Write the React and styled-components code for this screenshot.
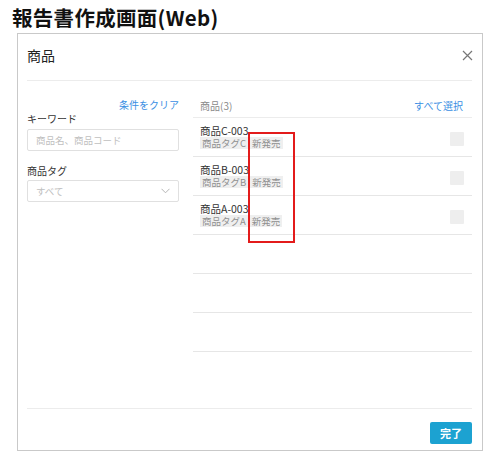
import React from 'react';
import styled, { createGlobalStyle } from 'styled-components';

const GlobalStyle = createGlobalStyle`
  html, body {
    margin: 0;
    padding: 0;
    background: #fff;
  }
  body {
    font-family: "Noto Sans CJK JP", "Liberation Sans", sans-serif;
    color: #333;
  }
  * { box-sizing: border-box; }
`;

const Page = styled.div`
  width: 484px;
  height: 453px;
  position: relative;
`;

const PageTitle = styled.h1`
  margin: 0;
  padding: 3px 0 0 12px;
  height: 33px;
  font-size: 20.5px;
  line-height: 29px;
  font-weight: 700;
  color: #111;
  letter-spacing: 0.3px;
`;

const Modal = styled.div`
  margin-left: 17px;
  width: 466px;
  height: 418px;
  border: 1px solid #c9c9c9;
  background: #fff;
  display: flex;
  flex-direction: column;
`;

const Header = styled.div`
  margin: 0 10px 0 9px;
  height: 47px;
  border-bottom: 1px solid #ececec;
  display: flex;
  align-items: center;
  justify-content: space-between;
  padding-bottom: 4px;
`;

const HeaderTitle = styled.div`
  font-size: 14px;
  line-height: 18px;
  color: #222;
`;

const CloseBtn = styled.button`
  border: 0;
  background: none;
  padding: 0;
  margin-right: -1px;
  display: flex;
  color: #777;
`;

const Body = styled.div`
  flex: 1;
  margin: 0 10px 0 9px;
  display: flex;
  gap: 14px;
  border-bottom: 1px solid #ececec;
`;

const Filters = styled.div`
  width: 152px;
  display: flex;
  flex-direction: column;
  padding-top: 17px;
`;

const Link = styled.a`
  font-size: 10px;
  line-height: 14px;
  color: #3b8fe3;
  text-decoration: none;
  cursor: pointer;
  align-self: ${p => (p.$right ? 'flex-end' : 'auto')};
`;

const Label = styled.div`
  font-size: 10px;
  line-height: 14px;
  color: #333;
  margin-top: ${p => p.$top || 0}px;
`;

const Field = styled.div`
  margin-top: ${p => p.$top || 0}px;
  height: 22px;
  border: 1px solid #e0e0e0;
  border-radius: 2px;
  display: flex;
  align-items: center;
  justify-content: space-between;
  padding: 0 8px;
  font-size: 9.5px;
  color: #c0c0c0;
`;

const Results = styled.div`
  flex: 1;
  display: flex;
  flex-direction: column;
  position: relative;
`;

const ResultsHead = styled.div`
  height: 37px;
  border-bottom: 1px solid #ececec;
  display: flex;
  align-items: flex-end;
  justify-content: space-between;
  padding: 0 9px 4px 7px;
`;

const Count = styled.div`
  font-size: 10px;
  line-height: 14px;
  color: #8a8a8a;
`;

const Row = styled.div`
  height: 39px;
  border-bottom: 1px solid #e6e6e6;
  display: flex;
  align-items: center;
  justify-content: space-between;
  padding: 0 8px 0 7px;
`;

const Info = styled.div`
  display: flex;
  flex-direction: column;
  padding-bottom: 1px;
`;

const Name = styled.div`
  font-size: 10.5px;
  line-height: 13px;
  height: 13px;
  color: #333;
`;

const Tags = styled.div`
  display: flex;
  gap: 2px;
  height: 13px;
  align-items: center;
`;

const Tag = styled.span`
  background: #efefef;
  color: #8f8f8f;
  font-size: 9.5px;
  line-height: 12px;
  height: 12px;
  padding: 0 2px;
`;

const Check = styled.div`
  width: 14px;
  height: 14px;
  background: #eeeeee;
  border-radius: 1px;
  margin-top: 3px;
`;

const Highlight = styled.div`
  position: absolute;
  left: 55px;
  top: 51px;
  width: 47px;
  height: 111px;
  border: 2px solid #e31b1b;
  pointer-events: none;
`;

const Footer = styled.div`
  height: 41px;
  display: flex;
  justify-content: flex-end;
  align-items: flex-start;
  padding: 13px 10px 0 0;
`;

const DoneBtn = styled.button`
  width: 42px;
  height: 22px;
  border: 0;
  border-radius: 2px;
  background: #1ca2d1;
  color: #fff;
  font-family: inherit;
  font-size: 11px;
  font-weight: 700;
  padding: 0;
`;

const items = [
  { name: '商品C-003', tag: '商品タグC' },
  { name: '商品B-003', tag: '商品タグB' },
  { name: '商品A-003', tag: '商品タグA' },
];

export default function App() {
  return (
    <Page>
      <GlobalStyle />
      <PageTitle>報告書作成画面(Web)</PageTitle>
      <Modal>
        <Header>
          <HeaderTitle>商品</HeaderTitle>
          <CloseBtn aria-label="close">
            <svg width="11" height="11" viewBox="0 0 11 11">
              <path d="M1 1 L10 10 M10 1 L1 10" stroke="#777" strokeWidth="1.2" fill="none" />
            </svg>
          </CloseBtn>
        </Header>
        <Body>
          <Filters>
            <Link $right>条件をクリア</Link>
            <Label>キーワード</Label>
            <Field $top={3}>商品名、商品コード</Field>
            <Label $top={13}>商品タグ</Label>
            <Field $top={2}>
              <span>すべて</span>
              <svg width="9" height="6" viewBox="0 0 9 6">
                <path d="M0.5 0.8 L4.5 4.8 L8.5 0.8" stroke="#b5b5b5" strokeWidth="1" fill="none" />
              </svg>
            </Field>
          </Filters>
          <Results>
            <ResultsHead>
              <Count>商品(3)</Count>
              <Link>すべて選択</Link>
            </ResultsHead>
            {items.map(it => (
              <Row key={it.name}>
                <Info>
                  <Name>{it.name}</Name>
                  <Tags>
                    <Tag>{it.tag}</Tag>
                    <Tag>新発売</Tag>
                  </Tags>
                </Info>
                <Check />
              </Row>
            ))}
            <Row />
            <Row />
            <Row />
            <Highlight />
          </Results>
        </Body>
        <Footer>
          <DoneBtn>完了</DoneBtn>
        </Footer>
      </Modal>
    </Page>
  );
}
